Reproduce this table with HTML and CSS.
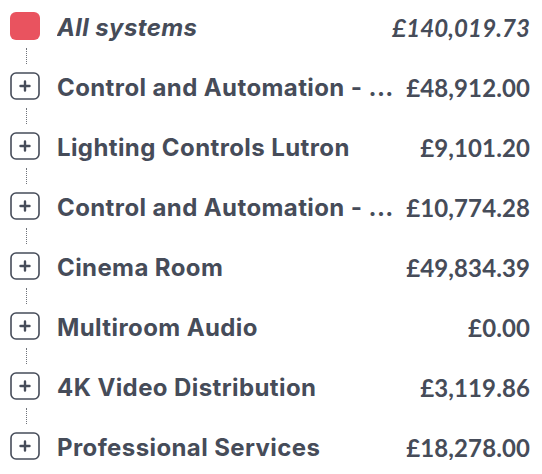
FILE: index.html
```html
<!DOCTYPE html>
<html>
<head>
<meta charset="utf-8">
<link rel="stylesheet" href="styles.css">
</head>
<body>
<ul class="tree">
  <li class="row root">
    <span class="swatch"></span>
    <span class="name">All systems</span>
    <span class="amount">£140,019.73</span>
  </li>
  <li class="link"></li>
  <li class="row">
    <span class="toggle"><svg viewBox="0 0 30 28" width="30" height="28"><rect x="1" y="1" width="28" height="26" rx="5" fill="none" stroke="#464c59" stroke-width="1.6"/><path d="M15 9.5v9M10.5 14h9" stroke="#464c59" stroke-width="2.4" stroke-linecap="round"/></svg></span>
    <span class="name">Control and Automation - ...</span>
    <span class="amount">£48,912.00</span>
  </li>
  <li class="link"></li>
  <li class="row">
    <span class="toggle"><svg viewBox="0 0 30 28" width="30" height="28"><rect x="1" y="1" width="28" height="26" rx="5" fill="none" stroke="#464c59" stroke-width="1.6"/><path d="M15 9.5v9M10.5 14h9" stroke="#464c59" stroke-width="2.4" stroke-linecap="round"/></svg></span>
    <span class="name">Lighting Controls Lutron</span>
    <span class="amount">£9,101.20</span>
  </li>
  <li class="link"></li>
  <li class="row">
    <span class="toggle"><svg viewBox="0 0 30 28" width="30" height="28"><rect x="1" y="1" width="28" height="26" rx="5" fill="none" stroke="#464c59" stroke-width="1.6"/><path d="M15 9.5v9M10.5 14h9" stroke="#464c59" stroke-width="2.4" stroke-linecap="round"/></svg></span>
    <span class="name">Control and Automation - ...</span>
    <span class="amount">£10,774.28</span>
  </li>
  <li class="link"></li>
  <li class="row">
    <span class="toggle"><svg viewBox="0 0 30 28" width="30" height="28"><rect x="1" y="1" width="28" height="26" rx="5" fill="none" stroke="#464c59" stroke-width="1.6"/><path d="M15 9.5v9M10.5 14h9" stroke="#464c59" stroke-width="2.4" stroke-linecap="round"/></svg></span>
    <span class="name">Cinema Room</span>
    <span class="amount">£49,834.39</span>
  </li>
  <li class="link"></li>
  <li class="row">
    <span class="toggle"><svg viewBox="0 0 30 28" width="30" height="28"><rect x="1" y="1" width="28" height="26" rx="5" fill="none" stroke="#464c59" stroke-width="1.6"/><path d="M15 9.5v9M10.5 14h9" stroke="#464c59" stroke-width="2.4" stroke-linecap="round"/></svg></span>
    <span class="name">Multiroom Audio</span>
    <span class="amount">£0.00</span>
  </li>
  <li class="link"></li>
  <li class="row">
    <span class="toggle"><svg viewBox="0 0 30 28" width="30" height="28"><rect x="1" y="1" width="28" height="26" rx="5" fill="none" stroke="#464c59" stroke-width="1.6"/><path d="M15 9.5v9M10.5 14h9" stroke="#464c59" stroke-width="2.4" stroke-linecap="round"/></svg></span>
    <span class="name">4K Video Distribution</span>
    <span class="amount">£3,119.86</span>
  </li>
  <li class="link"></li>
  <li class="row">
    <span class="toggle"><svg viewBox="0 0 30 28" width="30" height="28"><rect x="1" y="1" width="28" height="26" rx="5" fill="none" stroke="#464c59" stroke-width="1.6"/><path d="M15 9.5v9M10.5 14h9" stroke="#464c59" stroke-width="2.4" stroke-linecap="round"/></svg></span>
    <span class="name">Professional Services</span>
    <span class="amount">£18,278.00</span>
  </li>
</ul>
</body>
</html>
```
FILE: styles.css
```css
html, body {
  margin: 0;
  padding: 0;
  background: #ffffff;
}
body {
  font-family: Inter, Lato, sans-serif;
  color: #464c59;
}
.tree {
  list-style: none;
  margin: 0;
  padding: 12px 12px 0 10px;
  width: 520px;
}
.row {
  display: flex;
  align-items: center;
  height: 28px;
}
.swatch {
  flex: 0 0 30px;
  height: 28px;
  border-radius: 6px;
  background: #e9535f;
}
.toggle {
  flex: 0 0 30px;
  height: 28px;
  display: flex;
}
.name {
  flex: 1 1 auto;
  min-width: 0;
  margin-left: 17px;
  padding-top: 2px;
  font-size: 24px;
  font-weight: 700;
  letter-spacing: 0.4px;
  white-space: nowrap;
  overflow: hidden;
  text-overflow: ellipsis;
}
.amount {
  flex: 0 0 auto;
  margin-left: 8px;
  padding-top: 2px;
  font-family: Lato, sans-serif;
  font-size: 24px;
  font-weight: 700;
  letter-spacing: 0.1px;
  white-space: nowrap;
}
.root .name,
.root .amount {
  font-style: italic;
}
.link {
  height: 32px;
  display: flex;
  align-items: center;
  padding-left: 16px;
}
.link::before {
  content: "";
  width: 0;
  height: 16px;
  border-left: 1px dotted #6f737a;
}
```
